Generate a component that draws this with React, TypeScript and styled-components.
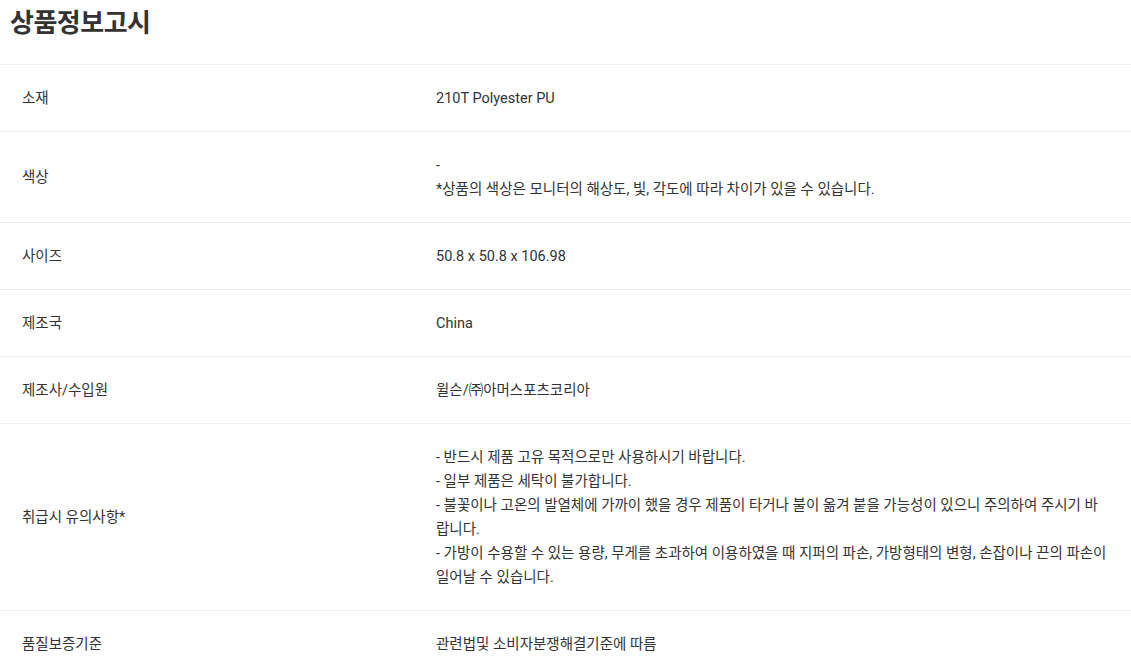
import React from "react";
import styled, { createGlobalStyle } from "styled-components";

const GlobalStyle = createGlobalStyle`
  html, body {
    margin: 0;
    padding: 0;
    background: #fff;
  }
  body {
    font-family: Roboto, "Noto Sans CJK KR", sans-serif;
    color: #333;
  }
`;

type Notice = {
  label: string;
  lines: string[];
};

const notices: Notice[] = [
  { label: "소재", lines: ["210T Polyester PU"] },
  {
    label: "색상",
    lines: ["-", "*상품의 색상은 모니터의 해상도, 빛, 각도에 따라 차이가 있을 수 있습니다."],
  },
  { label: "사이즈", lines: ["50.8 x 50.8 x 106.98"] },
  { label: "제조국", lines: ["China"] },
  { label: "제조사/수입원", lines: ["윌슨/㈜아머스포츠코리아"] },
  {
    label: "취급시 유의사항*",
    lines: [
      "- 반드시 제품 고유 목적으로만 사용하시기 바랍니다.",
      "- 일부 제품은 세탁이 불가합니다.",
      "- 불꽃이나 고온의 발열체에 가까이 했을 경우 제품이 타거나 불이 옮겨 붙을 가능성이 있으니 주의하여 주시기 바랍니다.",
      "- 가방이 수용할 수 있는 용량, 무게를 초과하여 이용하였을 때 지퍼의 파손, 가방형태의 변형, 손잡이나 끈의 파손이 일어날 수 있습니다.",
    ],
  },
  { label: "품질보증기준", lines: ["관련법및 소비자분쟁해결기준에 따름"] },
];

export default function App() {
  return (
    <>
      <GlobalStyle />
      <Section>
        <Title>상품정보고시</Title>
        <Table>
          <tbody>
            {notices.map((n) => (
              <Row key={n.label}>
                <Label>{n.label}</Label>
                <Value>
                  {n.lines.map((line, i) => (
                    <Line key={i}>{line}</Line>
                  ))}
                </Value>
              </Row>
            ))}
          </tbody>
        </Table>
      </Section>
    </>
  );
}

const Section = styled.section`
  width: 100%;
`;

const Title = styled.h2`
  margin: 0;
  padding: 6px 10px 24px;
  font-size: 26px;
  line-height: 34px;
  font-weight: 700;
  letter-spacing: -0.5px;
  color: #333;
`;

const Table = styled.table`
  width: 100%;
  border-collapse: collapse;
  border-top: 1px solid #eee;
  table-layout: fixed;
`;

const Row = styled.tr`
  border-bottom: 1px solid #eee;
`;

const Label = styled.th`
  width: 392px;
  padding: 22px 0 20px 22px;
  text-align: left;
  vertical-align: middle;
  font-size: 14.5px;
  font-weight: 400;
  line-height: 24px;
  color: #333;
`;

const Value = styled.td`
  padding: 22px 22px 20px 22px;
  vertical-align: middle;
  font-size: 14.5px;
  line-height: 24px;
  word-break: break-all;
  color: #333;
`;

const Line = styled.div``;
